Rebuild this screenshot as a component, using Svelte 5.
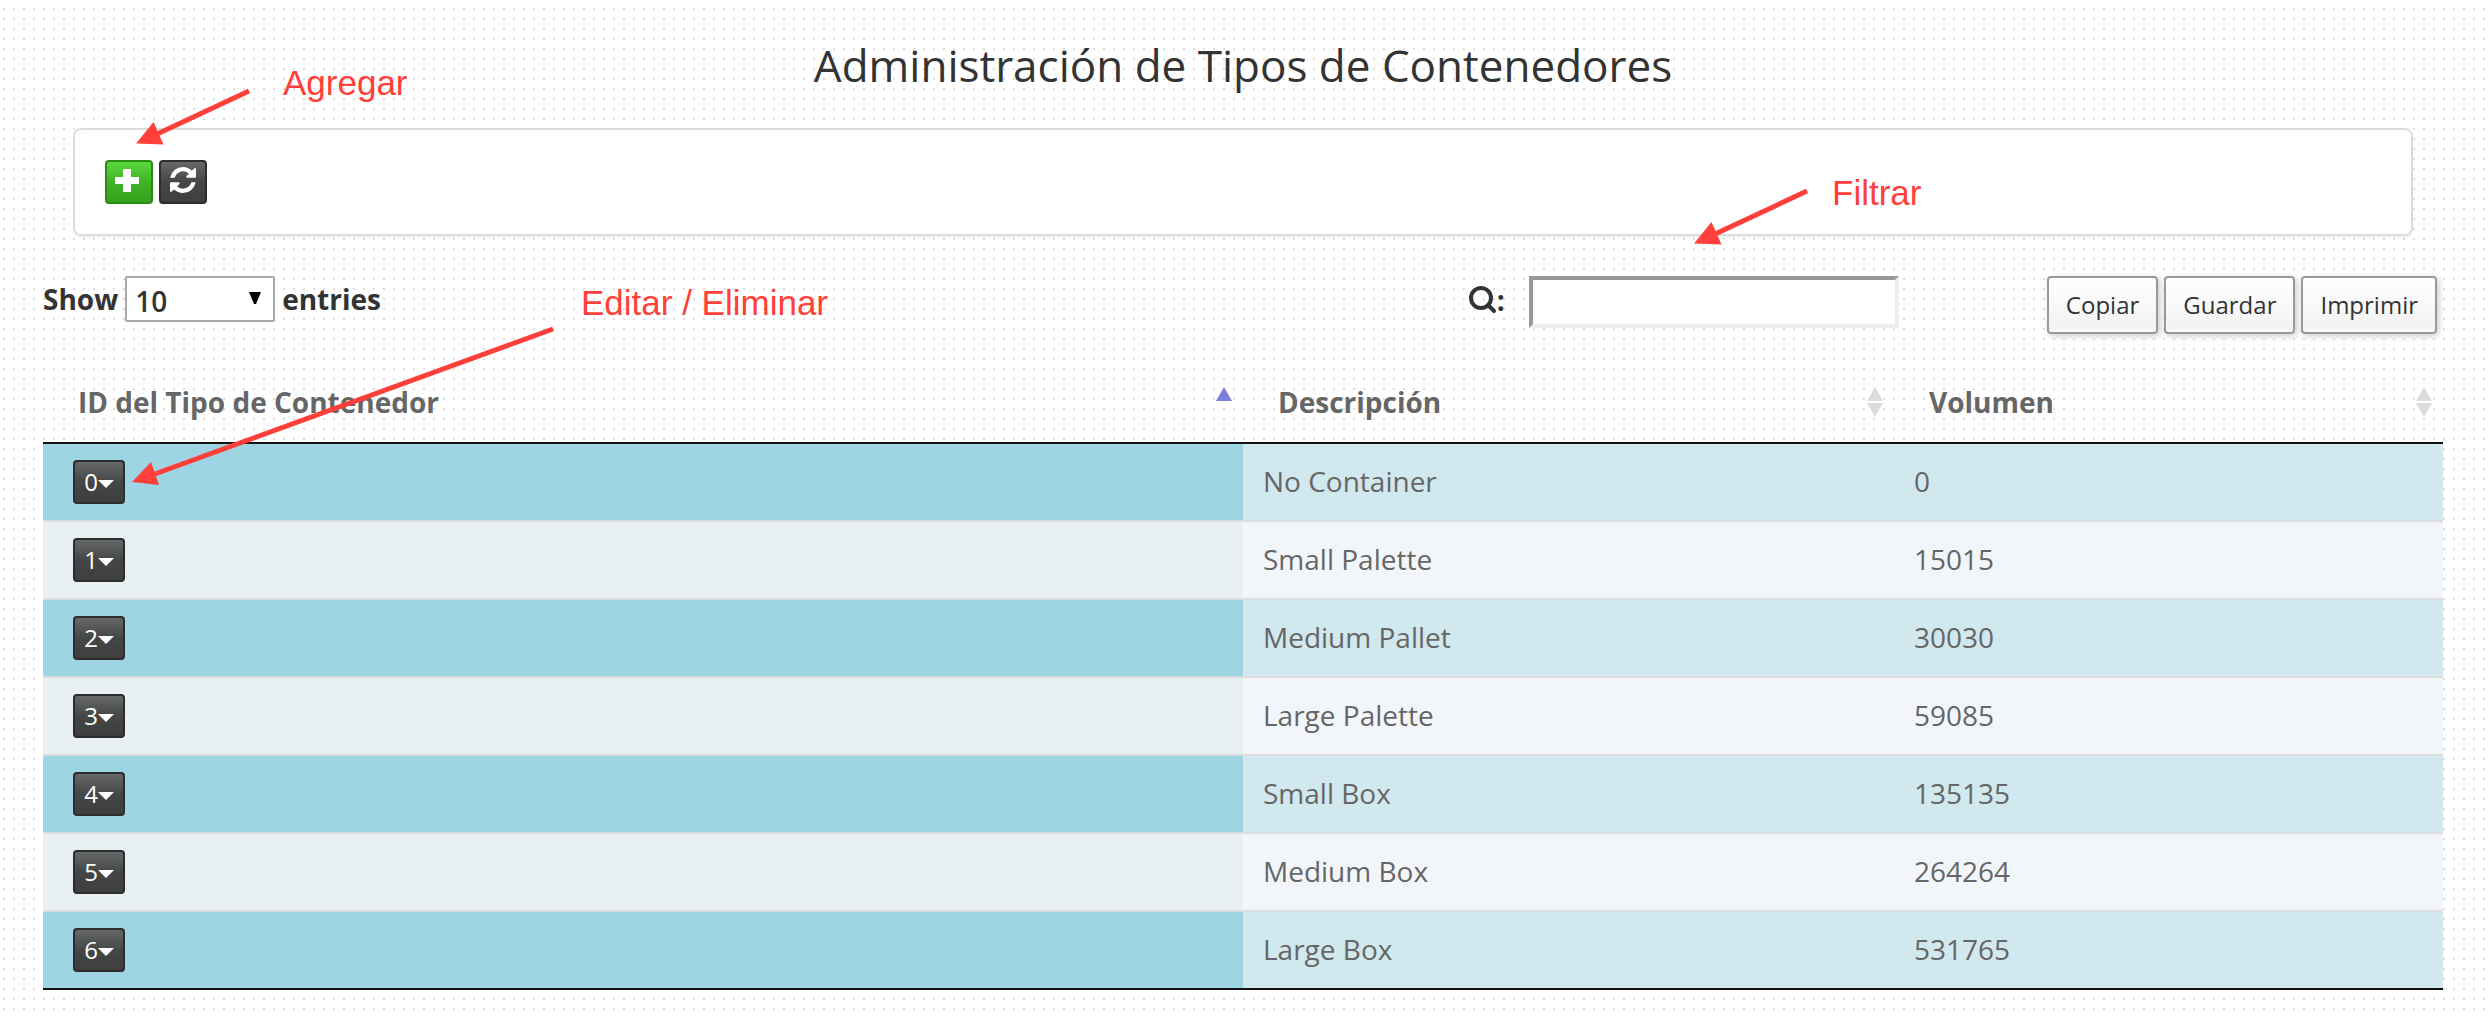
<script>
  const rows = [
    [0, 'No Container', '0'],
    [1, 'Small Palette', '15015'],
    [2, 'Medium Pallet', '30030'],
    [3, 'Large Palette', '59085'],
    [4, 'Small Box', '135135'],
    [5, 'Medium Box', '264264'],
    [6, 'Large Box', '531765'],
  ];
  let size = $state('10');
  let query = $state('');
  const visible = $derived(
    rows.filter((r) => r.join(' ').toLowerCase().includes(query.toLowerCase())).slice(0, Number(size))
  );
</script>

<main>
  <h1>Administración de Tipos de Contenedores</h1>

  <section class="panel">
    <button class="btn green" aria-label="Agregar">
      <svg width="28" height="26" viewBox="0 0 28 26"><path d="M8 0h8v8h8v7h-8v8H8v-8H0V8h8z" fill="#fff" /></svg>
    </button>
    <button class="btn dark" aria-label="Actualizar">
      <svg width="26" height="30" viewBox="0 0 1536 1772">
        <path fill="#fff" d="M1511 928q0 5-1 7-64 268-268 434.500T764 1536q-146 0-282.500-55T238 1324l-129 129q-19 19-45 19t-45-19-19-45V960q0-26 19-45t45-19h448q26 0 45 19t19 45-19 45l-137 137q71 66 161 102t187 36q134 0 250-65t186-179q11-17 53-117 8-23 30-23h192q13 0 22.500 9.500t9.500 22.500zm25-800v448q0 26-19 45t-45 19h-448q-26 0-45-19t-19-45 19-45l138-138Q969 256 768 256q-134 0-250 65T332 500q-11 17-53 117-8 23-30 23H50q-13 0-22.500-9.500T18 608v-7q65-268 270-434.500T768 0q146 0 284 55.500T1297 212l130-129q19-19 45-19t45 19 19 45z" />
      </svg>
    </button>
  </section>

  <div class="toolbar">
    <div class="length">
      <label for="size">Show</label>
      <span class="select">
        <select id="size" bind:value={size}>
          <option>10</option>
          <option>25</option>
          <option>50</option>
          <option>100</option>
        </select>
        <svg width="12" height="12" viewBox="0 0 12 12"><path d="M0 0h12L7 12H5z" fill="#000" /></svg>
      </span>
      <label for="size">entries</label>
    </div>
    <div class="search">
      <label for="query" aria-label="Filtrar">
        <svg width="28" height="28" viewBox="0 0 28 28">
          <circle cx="12" cy="12" r="10" fill="none" stroke="#333" stroke-width="4" />
          <path d="M19 19l6 6" stroke="#333" stroke-width="4" stroke-linecap="round" />
        </svg>:
      </label>
      <input id="query" type="text" bind:value={query} />
    </div>
    <div class="export">
      <button>Copiar</button>
      <button>Guardar</button>
      <button>Imprimir</button>
    </div>
  </div>

  <table>
    <thead>
      <tr>
        <th class="id" aria-sort="ascending">
          <div>ID del Tipo de Contenedor
            <svg width="16" height="30" viewBox="0 0 16 30"><path d="M8 0l8 14H0z" fill="#7b7fdd" /></svg>
          </div>
        </th>
        <th class="desc">
          <div>Descripción
            <svg width="16" height="30" viewBox="0 0 16 30"><path d="M8 0l8 14H0zM0 16h16L8 30z" fill="#dcdcdc" /></svg>
          </div>
        </th>
        <th>
          <div>Volumen
            <svg width="16" height="30" viewBox="0 0 16 30"><path d="M8 0l8 14H0zM0 16h16L8 30z" fill="#dcdcdc" /></svg>
          </div>
        </th>
      </tr>
    </thead>
    <tbody>
      {#each visible as [id, description, volume] (id)}
        <tr>
          <td>
            <button class="btn dark">{id}<svg width="16" height="12" viewBox="0 0 16 12"><path d="M0 4h16L8 12z" fill="#fff" /></svg></button>
          </td>
          <td>{description}</td>
          <td>{volume}</td>
        </tr>
      {/each}
    </tbody>
  </table>

  <div class="note add">Agregar</div>
  <div class="note filter">Filtrar</div>
  <div class="note edit">Editar / Eliminar</div>
  <svg class="arrow add-arrow" width="120" height="60" viewBox="0 0 120 60">
    <path d="M116 3L22 47" /><path class="head" d="M3 55.500L20.500 34L30.500 56.500z" />
  </svg>
  <svg class="arrow filter-arrow" width="120" height="60" viewBox="0 0 120 60">
    <path d="M116 3L22 47" /><path class="head" d="M3 55.500L20.500 34L30.500 56.500z" />
  </svg>
  <svg class="arrow edit-arrow" width="430" height="164" viewBox="0 0 430 164">
    <path d="M423 4L22 150" /><path class="head" d="M2 157L21 137L29 160z" />
  </svg>
</main>

<style>
  :global(body) {
    background-color: #fff;
    background-image: conic-gradient(from 90deg at 8px 8px, #ddd 90deg, transparent 0);
    background-size: 10px 10px;
    background-position: 5px 0;
  }
  main {
    position: relative;
    padding: 32px 47px 24px 43px;
    font-family: 'Open Sans', sans-serif;
    font-size: 28px;
    line-height: 40px;
    color: #333;
  }
  button, input, select {
    box-sizing: border-box;
    font: inherit;
    color: inherit;
  }
  h1 {
    margin: 0 0 30px;
    text-align: center;
    font-size: 44px;
    font-weight: 400;
    line-height: 66px;
  }
  .panel {
    display: flex;
    gap: 6px;
    margin: 0 30px;
    padding: 30px;
    border: 2px solid #ddd;
    border-radius: 8px;
    background: #fff;
    box-shadow: 0 2px 2px rgba(0, 0, 0, 0.05);
  }
  .btn {
    display: flex;
    align-items: center;
    justify-content: center;
    min-width: 48px;
    height: 44px;
    padding: 0;
    border: 2px solid #2c2d2d;
    border-radius: 4px;
    font-size: 24px;
    line-height: 36px;
    color: #fff;
  }
  .dark {
    background: linear-gradient(#666869, #454746 50%, #3d3e3d);
  }
  .green {
    border-color: #2c8a15;
    background: linear-gradient(#5bd83f, #40b425 50%, #36a11d);
  }
  .toolbar {
    display: flex;
    align-items: flex-start;
    margin-top: 40px;
    padding-right: 6px;
    font-weight: 700;
  }
  .length {
    display: flex;
    align-items: center;
    gap: 7px;
    flex: 1;
    line-height: 46px;
  }
  .select {
    display: grid;
    align-items: center;
  }
  .select > * {
    grid-area: 1 / 1;
  }
  .select svg {
    justify-self: end;
    margin-right: 14px;
    margin-bottom: 3px;
    pointer-events: none;
  }
  select {
    appearance: none;
    width: 150px;
    height: 46px;
    padding: 0 8px 2px;
    border: 2px solid #a9a9a9;
    border-radius: 2px;
    background: #fff;
    font-weight: 600;
  }
  .search {
    display: flex;
    gap: 24px;
    line-height: 46px;
  }
  .search label {
    display: flex;
    align-items: center;
    height: 48px;
  }
  input {
    width: 370px;
    height: 52px;
    padding: 0 8px;
    border: 4px solid;
    border-color: #999 #eee #eee #999;
    background: #fff;
  }
  .export {
    display: flex;
    gap: 6px;
    margin-left: 148px;
  }
  .export button {
    height: 58px;
    padding: 0 17px;
    border: 2px solid #999;
    border-radius: 4px;
    background: linear-gradient(#fff, #f3f3f3 89%, #f9f9f9);
    box-shadow: 2px 2px 6px #ccc;
    font-size: 24px;
    font-weight: 400;
  }
  table {
    width: 100%;
    margin-top: 28px;
    table-layout: fixed;
    border-collapse: separate;
    border-spacing: 0;
    border-bottom: 2px solid #111;
    color: #666;
  }
  th {
    box-sizing: border-box;
    padding: 20px 11px 20px 35px;
    border-bottom: 2px solid #111;
    text-align: left;
    font-weight: 700;
  }
  th div {
    display: flex;
    align-items: center;
    justify-content: space-between;
  }
  .id {
    width: 50%;
  }
  .desc {
    width: 27.125%;
  }
  td {
    box-sizing: border-box;
    height: 78px;
    padding: 0 20px 2px;
    background: #d1e8ee;
  }
  td:first-child {
    padding: 0 30px;
    background: #9fd4e2;
  }
  tr:nth-child(even) td {
    background: #f2f6fa;
  }
  tr:nth-child(even) td:first-child {
    background: #e8f0f4;
  }
  tbody tr:first-child td {
    height: 76px;
  }
  tbody tr + tr td {
    border-top: 2px solid #ddd;
  }
  td .btn {
    min-width: 52px;
  }
  .note {
    position: absolute;
    font-family: 'Liberation Sans', sans-serif;
    font-size: 35px;
    white-space: nowrap;
    color: #ff3f3a;
  }
  .add { left: 283px; top: 63px; }
  .filter { left: 1832px; top: 173px; }
  .edit { left: 581px; top: 283px; }
  .arrow {
    position: absolute;
    pointer-events: none;
    fill: none;
    stroke: #ff3f3a;
    stroke-width: 5;
  }
  .head {
    fill: #ff3f3a;
    stroke: none;
  }
  .add-arrow { left: 133px; top: 88px; }
  .filter-arrow { left: 1691px; top: 188px; }
  .edit-arrow { left: 130px; top: 325px; }
</style>
